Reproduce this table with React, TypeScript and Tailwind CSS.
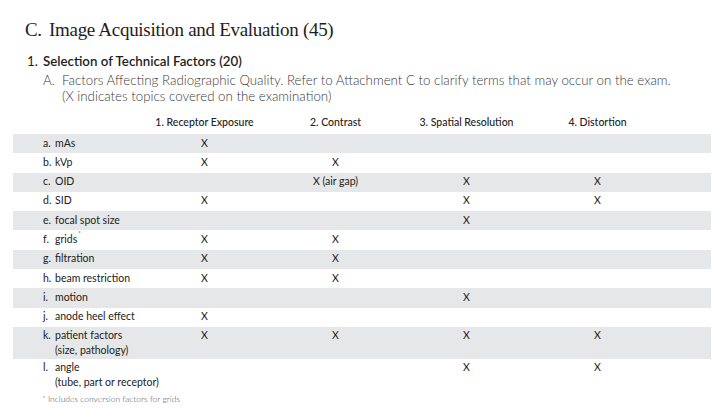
import React from "react";

type Row = { l: string; t: string[]; c: string[]; gray: boolean };

const rows: Row[] = [
  { l: "a.", t: ["mAs"], c: ["X", "", "", ""], gray: true },
  { l: "b.", t: ["kVp"], c: ["X", "X", "", ""], gray: false },
  { l: "c.", t: ["OID"], c: ["", "X (air gap)", "X", "X"], gray: true },
  { l: "d.", t: ["SID"], c: ["X", "", "X", "X"], gray: false },
  { l: "e.", t: ["focal spot size"], c: ["", "", "X", ""], gray: true },
  { l: "f.", t: ["grids*"], c: ["X", "X", "", ""], gray: false },
  { l: "g.", t: ["filtration"], c: ["X", "X", "", ""], gray: true },
  { l: "h.", t: ["beam restriction"], c: ["X", "X", "", ""], gray: false },
  { l: "i.", t: ["motion"], c: ["", "", "X", ""], gray: true },
  { l: "j.", t: ["anode heel effect"], c: ["X", "", "", ""], gray: false },
  { l: "k.", t: ["patient factors", "(size, pathology)"], c: ["X", "X", "X", "X"], gray: true },
  { l: "l.", t: ["angle", "(tube, part or receptor)"], c: ["", "", "X", "X"], gray: false },
];

const sans = { fontFamily: "Lato, 'Open Sans', sans-serif" };

export default function App() {
  return (
    <div className="w-[720px] h-[408px] bg-white overflow-hidden text-[#222]" style={sans}>
      <div className="pt-[18px]">
        <div
          className="pl-[25px] text-[19px] leading-[24px] tracking-[-0.3px] text-[#1e1e1e] flex"
          style={{ fontFamily: "'Liberation Serif', serif" }}
        >
          <span className="w-[24px]">C.</span>
          <span>Image Acquisition and Evaluation (45)</span>
        </div>
        <div className="mt-[11px] pl-[27px] text-[13.3px] leading-[16px] flex text-[#1e1e1e]">
          <span className="w-[16px]">1.</span>
          <span className="font-semibold">Selection of Technical Factors (20)</span>
        </div>
        <div className="mt-[3px] pl-[43px] text-[13.3px] leading-[16px] font-light text-[#3a3a3a] flex">
          <span className="w-[19px]">A.</span>
          <span>
            Factors Affecting Radiographic Quality. Refer to Attachment C to clarify terms that may occur on the exam.
          </span>
        </div>
        <div className="pl-[62px] text-[13.3px] leading-[16px] font-light text-[#3a3a3a]">
          (X indicates topics covered on the examination)
        </div>

        <div className="mt-[10px] ml-[13px] w-[698px]">
          <div className="grid grid-cols-[126px_131px_131px_131px_131px_1fr] h-[20px] items-end pb-[4px] text-[10.5px] leading-[16px] font-medium text-[#222]">
            <div />
            <div className="text-center">1. Receptor Exposure</div>
            <div className="text-center">2. Contrast</div>
            <div className="text-center">3. Spatial Resolution</div>
            <div className="text-center">4. Distortion</div>
            <div />
          </div>
          {rows.map((r) => (
            <div
              key={r.l}
              className={
                "grid grid-cols-[126px_131px_131px_131px_131px_1fr] items-start pt-[1.6px] text-[10.5px] leading-[15px] " +
                (r.t.length > 1 ? "pb-[0.4px] " : "pb-[2.7px] ") +
                (r.gray ? "bg-[#e6e7e8]" : "bg-white")
              }
            >
              <div className="pl-[30px] flex">
                <span className="w-[12px] shrink-0">{r.l}</span>
                <span className="whitespace-nowrap">
                  {r.t.map((line, i) => (
                    <div key={i}>
                      {line.endsWith("*") ? (
                        <>
                          {line.slice(0, -1)}
                          <sup className="text-[6px] align-top relative top-[1px] ml-[1px]">*</sup>
                        </>
                      ) : (
                        line
                      )}
                    </div>
                  ))}
                </span>
              </div>
              {r.c.map((v, i) => (
                <div key={i} className="text-center whitespace-nowrap">
                  {v}
                </div>
              ))}
              <div />
            </div>
          ))}
          <div className="mt-[2px] pl-[29px] text-[8.5px] leading-[12px] font-light text-[#555]">
            * Includes conversion factors for grids
          </div>
        </div>
      </div>
    </div>
  );
}
